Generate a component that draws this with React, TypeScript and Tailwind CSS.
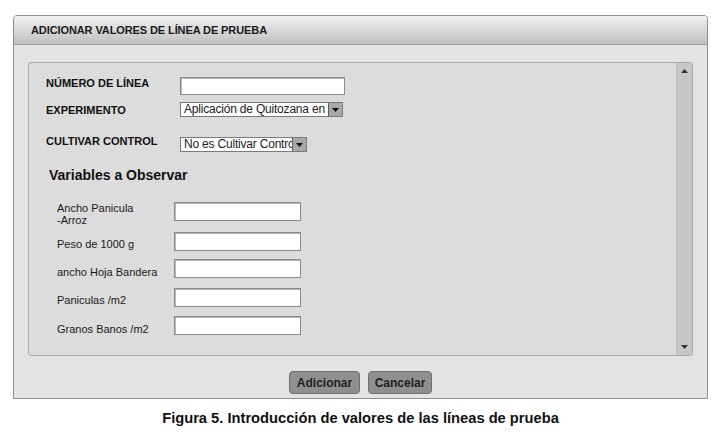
import React from 'react';

const variables = [
  { label: ['Ancho Panicula', '-Arroz'], mt: 'mt-[18px]', pt: 'pt-0' },
  { label: ['Peso de 1000 g'], mt: 'mt-[11px]', pt: 'pt-[6px]' },
  { label: ['ancho Hoja Bandera'], mt: 'mt-[8px]', pt: 'pt-[7px]' },
  { label: ['Paniculas /m2'], mt: 'mt-[10px]', pt: 'pt-[6px]' },
  { label: ['Granos Banos /m2'], mt: 'mt-[9px]', pt: 'pt-[7px]' }
];

const TextBox = ({ className = '' }: { className?: string }) => (
  <div
    className={`bg-white border border-[#8a8a8a] shadow-[inset_1px_1px_0_#b8b8b8] ${className}`}
  />
);

const SelectBox = ({ value, width }: { value: string; width: string }) => (
  <div className={`flex h-[15px] ${width} border border-[#7a7a7a] bg-white`}>
    <div className="flex-1 overflow-hidden whitespace-nowrap pl-[3px] text-[12px] leading-[13px] text-[#222] tracking-[-0.2px]">
      {value}
    </div>
    <div className="flex w-[14px] items-center justify-center border-l border-[#5a5a5a] bg-[#a8a8a8]">
      <svg width="7" height="4" viewBox="0 0 7 4">
        <path d="M0 0h7L3.5 4z" fill="#111" />
      </svg>
    </div>
  </div>
);

const App = () => {
  return (
    <div
      className="w-[721px] h-[435px] bg-white overflow-hidden"
      style={{ fontFamily: '"Liberation Sans", Arial, sans-serif' }}
    >
      {/* Dialog */}
      <div className="ml-[13px] mt-[15px] w-[695px] h-[384px] flex flex-col border border-[#8e8e8e] rounded-t-[4px] bg-[#e3e3e3]">
        <div className="h-[29px] flex items-center pl-[17px] rounded-t-[3px] border-b border-[#9c9c9c] bg-gradient-to-b from-[#f1f1f1] to-[#c0c0c0]">
          <span className="text-[11px] font-bold text-[#1a1a1a] tracking-[-0.1px]">
            ADICIONAR VALORES DE LÍNEA DE PRUEBA
          </span>
        </div>

        <div className="px-[14px] pt-[17px]">
          {/* Inner panel */}
          <div className="h-[294px] flex border border-[#a9a9a9] rounded-[3px] bg-[#dcdcdc]">
            <div className="flex-1 flex flex-col pl-[17px] pt-[14px] text-[#111]">
              <div className="flex items-start h-[18px]">
                <div className="w-[134px] text-[11px] font-bold leading-[12px]">NÚMERO DE LÍNEA</div>
                <TextBox className="w-[165px] h-[18px]" />
              </div>
              <div className="flex items-center mt-[7px]">
                <div className="w-[134px] text-[11px] font-bold leading-[12px]">EXPERIMENTO</div>
                <SelectBox value="Aplicación de Quitozana en" width="w-[163px]" />
              </div>
              <div className="flex items-start mt-[20px]">
                <div className="w-[134px] text-[11px] font-bold leading-[12px] -mt-[2px]">CULTIVAR CONTROL</div>
                <SelectBox value="No es Cultivar Control" width="w-[127px]" />
              </div>
              <div className="mt-[15px] pl-[3px] text-[14px] font-bold leading-[17px]">Variables a Observar</div>

              {variables.map((v) => (
                <div key={v.label[0]} className={`flex items-start h-[19px] ${v.mt}`}>
                  <div className={`w-[128px] pl-[11px] ${v.pt} text-[11px] leading-[12px] text-[#1a1a1a]`}>
                    {v.label.map((l) => (
                      <div key={l}>{l}</div>
                    ))}
                  </div>
                  <TextBox className="w-[127px] h-[19px]" />
                </div>
              ))}
            </div>

            {/* Scrollbar */}
            <div className="w-[16px] flex flex-col justify-between items-center py-[6px] border-l border-[#bdbdbd] rounded-r-[3px] bg-[#c6c6c6]">
              <svg width="7" height="4" viewBox="0 0 7 4">
                <path d="M3.5 0L7 4H0z" fill="#333" />
              </svg>
              <svg width="7" height="4" viewBox="0 0 7 4">
                <path d="M0 0h7L3.5 4z" fill="#333" />
              </svg>
            </div>
          </div>
        </div>

        <div className="flex justify-center gap-[8px] mt-[15px]">
          <button className="h-[23px] w-[71px] rounded-[4px] border border-[#6e6e6e] bg-[#8f8f8f] text-[12px] font-bold text-[#1e1e1e]">
            Adicionar
          </button>
          <button className="h-[23px] w-[64px] rounded-[4px] border border-[#6e6e6e] bg-[#8f8f8f] text-[12px] font-bold text-[#1e1e1e]">
            Cancelar
          </button>
        </div>
      </div>

      <div className="mt-[10px] text-center text-[14.7px] font-bold text-[#111] leading-[18px]">
        Figura 5. Introducción de valores de las líneas de prueba
      </div>
    </div>
  );
};

export default App;
